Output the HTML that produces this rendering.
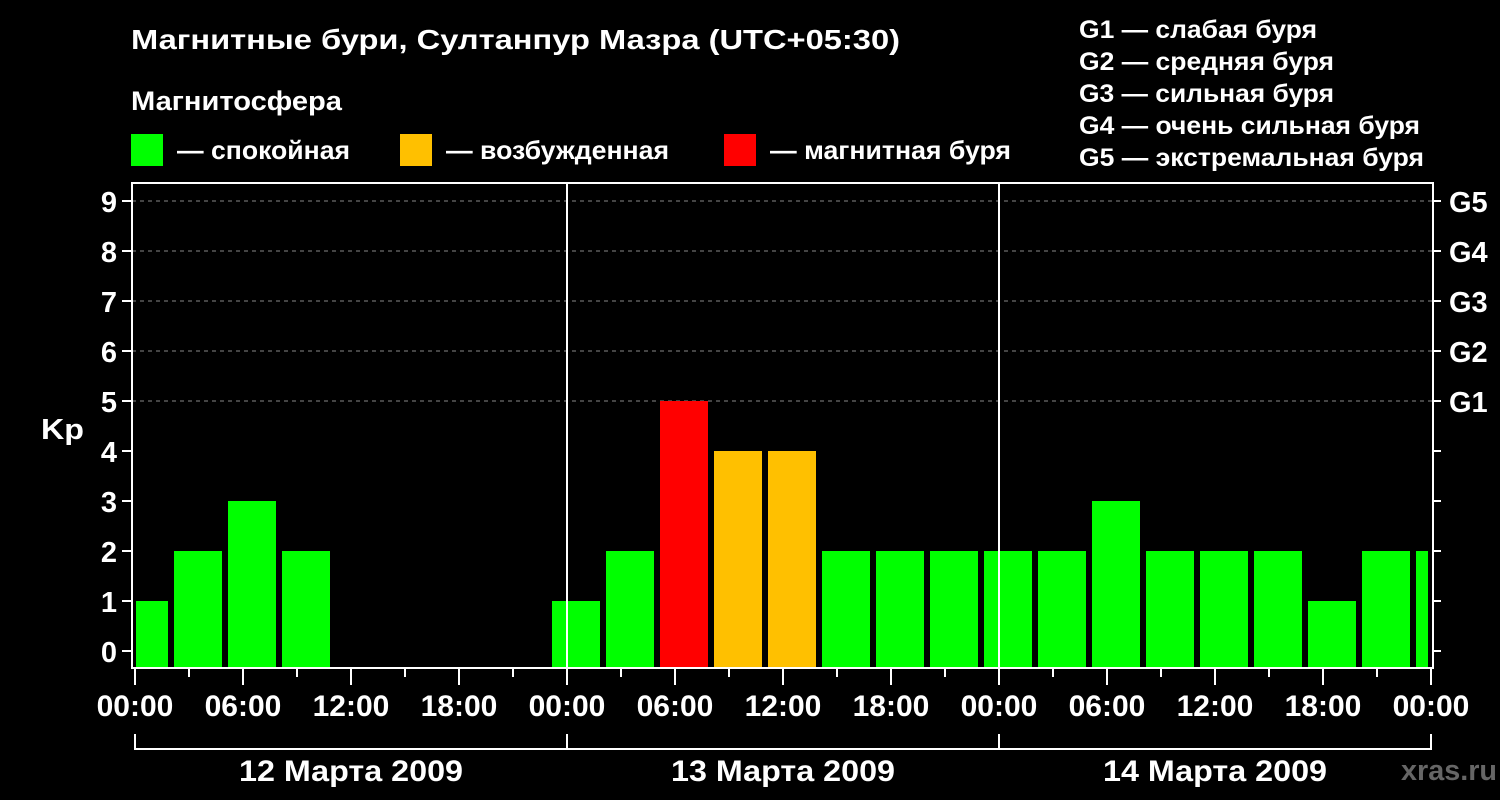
<!DOCTYPE html>
<html><head><meta charset="utf-8"><style>
html,body{margin:0;padding:0;background:#000;width:1500px;height:800px;overflow:hidden}
svg text{font-family:"Liberation Sans",Arial,sans-serif;font-weight:bold;fill:#fff}
</style></head><body>
<svg width="1500" height="800" xmlns="http://www.w3.org/2000/svg">
<text x="131" y="49" font-size="28" textLength="769" lengthAdjust="spacingAndGlyphs">Магнитные бури, Султанпур Мазра (UTC+05:30)</text>
<text x="131" y="110" font-size="27" textLength="211" lengthAdjust="spacingAndGlyphs">Магнитосфера</text>
<rect x="131" y="134" width="32" height="32" fill="#00ff00"/>
<text x="177" y="159" font-size="26" textLength="173" lengthAdjust="spacingAndGlyphs">— спокойная</text>
<rect x="400" y="134" width="32" height="32" fill="#ffc000"/>
<text x="446" y="159" font-size="26" textLength="223" lengthAdjust="spacingAndGlyphs">— возбужденная</text>
<rect x="724" y="134" width="32" height="32" fill="#ff0000"/>
<text x="770" y="159" font-size="26" textLength="241" lengthAdjust="spacingAndGlyphs">— магнитная буря</text>
<g font-size="25">
<text x="1079" y="38" textLength="238" lengthAdjust="spacingAndGlyphs">G1 — слабая буря</text>
<text x="1079" y="70" textLength="255" lengthAdjust="spacingAndGlyphs">G2 — средняя буря</text>
<text x="1079" y="102" textLength="255" lengthAdjust="spacingAndGlyphs">G3 — сильная буря</text>
<text x="1079" y="134" textLength="341" lengthAdjust="spacingAndGlyphs">G4 — очень сильная буря</text>
<text x="1079" y="166" textLength="345" lengthAdjust="spacingAndGlyphs">G5 — экстремальная буря</text>
</g>
<g stroke="#888" stroke-width="1" stroke-dasharray="4,4">
<line x1="132" y1="201" x2="1432" y2="201"/><line x1="132" y1="251" x2="1432" y2="251"/>
<line x1="132" y1="301" x2="1432" y2="301"/><line x1="132" y1="351" x2="1432" y2="351"/>
<line x1="132" y1="401" x2="1432" y2="401"/>
</g>
<g>
<rect x="136" y="601" width="32" height="67" fill="#00ff00"/>
<rect x="174" y="551" width="48" height="117" fill="#00ff00"/>
<rect x="228" y="501" width="48" height="167" fill="#00ff00"/>
<rect x="282" y="551" width="48" height="117" fill="#00ff00"/>
<rect x="552" y="601" width="48" height="67" fill="#00ff00"/>
<rect x="606" y="551" width="48" height="117" fill="#00ff00"/>
<rect x="660" y="401" width="48" height="267" fill="#ff0000"/>
<rect x="714" y="451" width="48" height="217" fill="#ffc000"/>
<rect x="768" y="451" width="48" height="217" fill="#ffc000"/>
<rect x="822" y="551" width="48" height="117" fill="#00ff00"/>
<rect x="876" y="551" width="48" height="117" fill="#00ff00"/>
<rect x="930" y="551" width="48" height="117" fill="#00ff00"/>
<rect x="984" y="551" width="48" height="117" fill="#00ff00"/>
<rect x="1038" y="551" width="48" height="117" fill="#00ff00"/>
<rect x="1092" y="501" width="48" height="167" fill="#00ff00"/>
<rect x="1146" y="551" width="48" height="117" fill="#00ff00"/>
<rect x="1200" y="551" width="48" height="117" fill="#00ff00"/>
<rect x="1254" y="551" width="48" height="117" fill="#00ff00"/>
<rect x="1308" y="601" width="48" height="67" fill="#00ff00"/>
<rect x="1362" y="551" width="48" height="117" fill="#00ff00"/>
<rect x="1416" y="551" width="12" height="117" fill="#00ff00"/>
</g>
<g stroke="#fff" stroke-width="2" fill="none">
<rect x="132" y="183" width="1301" height="485"/>
<line x1="567" y1="183" x2="567" y2="668"/><line x1="999" y1="183" x2="999" y2="668"/>
<path d="M122 201H132M122 251H132M122 301H132M122 351H132M122 401H132M122 451H132M122 501H132M122 551H132M122 601H132M122 651H132"/>
<path d="M1433 201H1441M1433 251H1441M1433 301H1441M1433 351H1441M1433 401H1441M1433 451H1441M1433 501H1441M1433 551H1441M1433 601H1441M1433 651H1441"/>
<path d="M135 668V685M189 668V677M243 668V685M297 668V677M351 668V685M405 668V677M459 668V685M513 668V677M567 668V685M621 668V677M675 668V685M729 668V677M783 668V685M837 668V677M891 668V685M945 668V677M999 668V685M1053 668V677M1107 668V685M1161 668V677M1215 668V685M1269 668V677M1323 668V685M1377 668V677M1431 668V685"/>
<path d="M135 734V749H1431V734M567 734V749M999 734V749"/>
</g>
<g font-size="29" text-anchor="end">
<text x="117" y="212">9</text><text x="117" y="262">8</text><text x="117" y="312">7</text><text x="117" y="362">6</text><text x="117" y="412">5</text><text x="117" y="462">4</text><text x="117" y="512">3</text><text x="117" y="562">2</text><text x="117" y="612">1</text><text x="117" y="662">0</text>
</g>
<text x="41" y="439" font-size="29" textLength="43" lengthAdjust="spacingAndGlyphs">Kp</text>
<g font-size="29">
<text x="1449" y="212">G5</text><text x="1449" y="262">G4</text><text x="1449" y="312">G3</text><text x="1449" y="362">G2</text><text x="1449" y="412">G1</text>
</g>
<g font-size="30" text-anchor="middle">
<text x="135" y="716">00:00</text><text x="243" y="716">06:00</text><text x="351" y="716">12:00</text><text x="459" y="716">18:00</text>
<text x="567" y="716">00:00</text><text x="675" y="716">06:00</text><text x="783" y="716">12:00</text><text x="891" y="716">18:00</text>
<text x="999" y="716">00:00</text><text x="1107" y="716">06:00</text><text x="1215" y="716">12:00</text><text x="1323" y="716">18:00</text>
<text x="1431" y="716">00:00</text>
<text x="351" y="781" textLength="224" lengthAdjust="spacingAndGlyphs">12 Марта 2009</text><text x="783" y="781" textLength="224" lengthAdjust="spacingAndGlyphs">13 Марта 2009</text><text x="1215" y="781" textLength="224" lengthAdjust="spacingAndGlyphs">14 Марта 2009</text>
</g>
<text x="1401" y="780" font-size="29" textLength="96" lengthAdjust="spacingAndGlyphs" style="fill:#666">xras.ru</text>
</svg>
</body></html>
